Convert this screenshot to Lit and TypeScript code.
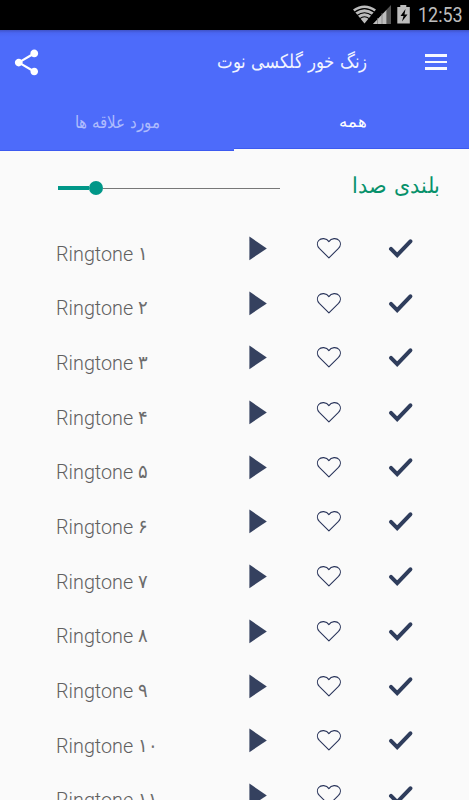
import { LitElement, html, css, svg } from "lit";
import { customElement, property } from "lit/decorators.js";

@customElement("fit-text")
class FitText extends LitElement {
  @property({ type: String }) text = "";
  @property({ type: Number }) width = 50;
  @property({ type: Number }) size = 18;
  @property({ type: Number }) baseline = 24;
  static styles = css`
    :host { display: block; height: 36px; }
    svg { display: block; overflow: visible; fill: currentColor; }
    text { font-family: "DejaVu Sans", sans-serif; font-weight: 200; direction: rtl; }
  `;
  render() {
    return html`<svg width=${this.width} height="36">
      ${svg`<text x=${this.width} y=${this.baseline} font-size=${this.size} textLength=${this.width} lengthAdjust="spacingAndGlyphs">${this.text}</text>`}
    </svg>`;
  }
}

@customElement("ringtone-row")
class RingtoneRow extends LitElement {
  @property({ type: String }) number = "";
  static styles = css`
    :host {
      display: grid;
      grid-template-columns: 191px 68px 72px 1fr;
      height: 54.7px;
      padding-left: 55.5px;
      flex: none;
      box-sizing: border-box;
    }
    .name {
      font: 300 20.4px/30px Roboto, "DejaVu Sans", sans-serif;
      color: #606060;
      padding-top: 10.6px;
      display: flex;
      white-space: pre;
    }
    .word { width: 82px; transform: scaleX(0.97); transform-origin: left; }
    .digits {
      font: 200 18.5px/30px "DejaVu Sans", sans-serif;
      transform: scaleX(0.95);
      transform-origin: left;
      color: #6c6c6c;
    }
    svg { display: block; width: 28px; height: 28px; margin: 6px 0 0 0.5px; }
  `;
  render() {
    return html`
      <div class="name"><span class="word">Ringtone</span><span class="digits">${this.number}</span></div>
      <svg viewBox="0 0 28 28"><path d="M2.4 2.6v23.6L19.8 14.4z" fill="#35415f" /></svg>
      <svg viewBox="0 0 28 28"><path d="M13.900 23.900L4.300 14.400C1.900 11.800 1.900 8.500 3.700 6.500C6 3.900 11.500 3.800 13.900 7.600C16.300 3.800 21.800 3.900 24.100 6.500C25.900 8.500 25.900 11.800 23.500 14.400z" fill="none" stroke="#29345a" stroke-width="1.100" stroke-linejoin="round" /></svg>
      <svg viewBox="0 0 28 28"><path d="M4 14.900L10.200 21.100L23.400 7.300" fill="none" stroke="#2f3d5c" stroke-width="4" stroke-linecap="round" /></svg>
    `;
  }
}

@customElement("app-root")
class AppRoot extends LitElement {
  static styles = css`
    :host {
      display: flex;
      flex-direction: column;
      width: 469px;
      height: 800px;
      overflow: hidden;
      background: #fafafa;
    }
    .status {
      height: 30px;
      flex: none;
      background: #000;
      color: #bdbdbd;
      display: flex;
      justify-content: flex-end;
      font: 400 19.5px/31px Roboto, sans-serif;
    }
    .status svg { display: block; }
    .clock { width: 51px; white-space: nowrap; transform: scaleX(0.92); transform-origin: left; }
    header {
      height: 121px;
      flex: none;
      background: linear-gradient(#4053c8, #4a66f2 3px, #4d6bfa 7px);
      color: #fff;
    }
    .bar { height: 64px; display: flex; padding: 0 22px 0 11px; }
    .share { width: 31px; height: 31px; margin-top: 17px; fill: #fff; }
    .title { margin: 13px 58px 0 auto; color: #f1f4ff; }
    .menu { width: 22px; margin-top: 24px; display: flex; flex-direction: column; gap: 4px; }
    .menu i { height: 2.5px; background: #f6f8ff; }
    .tabs { display: grid; grid-template-columns: 234px 235px; height: 57px; }
    .tab { box-sizing: border-box; padding-top: 9px; }
    .idle { color: #aebbfd; padding-left: 75px; border-bottom: 1px solid #3c5af0; }
    .active { padding-left: 105px; border-bottom: 2px solid #fafafa; box-shadow: inset 0 -1px #3c5af0; }
    .volume { height: 77px; flex: none; display: flex; padding: 0 29px 0 58px; }
    .slider { width: 222px; height: 14px; margin-top: 30px; display: flex; align-items: center; }
    .fill { width: 31px; height: 4px; background: #009788; }
    .thumb { width: 14px; height: 14px; border-radius: 50%; background: #009788; margin-left: -0.5px; }
    .track { flex: 1; height: 1px; background: #777; }
    .label { margin: 18px 0 0 auto; color: #07916a; }
    .list { display: flex; flex-direction: column; }
  `;
  private numbers = ["۱", "۲", "۳", "۴", "۵", "۶", "۷", "۸", "۹", "۱۰", "۱۱"];
  render() {
    return html`
      <div class="status">
        <svg width="65" height="30" viewBox="353 0 65 30">
          <path d="M364.500 23.500L353 9.500Q364.500 1.500 376 9.500z" fill="#bdbdbd" />
          <g fill="none" stroke="#000" stroke-width="1.100">
            <path d="M354.500 12.300Q364.500 5 374.500 12.300M357 15.500Q364.500 10 372 15.500M359.800 18.600Q364.500 15 369.200 18.600" />
          </g>
          <path d="M373 24L391 5v19z" fill="#555" />
          <path d="M373 24L386.500 10v14z" fill="#bdbdbd" />
          <path d="M377.500 18v6M382 13v11M386.500 10v14" stroke="#777" stroke-width=".7" />
          <path d="M397.300 7h3V5h6v2h3.500v16.500h-12.500z" fill="#bdbdbd" />
          <path d="M405.500 9l-5 7h3l-1.500 5.500 5.500-7h-3z" fill="#000" />
        </svg>
        <span class="clock">12:53</span>
      </div>
      <header>
        <div class="bar">
          <svg class="share" viewBox="0 0 24 24"><path d="M18 16.080c-.76 0-1.440.3-1.960.77L8.910 12.700c.05-.23.09-.46.09-.7s-.04-.47-.09-.7l7.050-4.110c.54.5 1.250.81 2.040.81 1.660 0 3-1.340 3-3s-1.340-3-3-3-3 1.340-3 3c0 .24.04.47.09.7L8.040 9.810C7.500 9.310 6.790 9 6 9c-1.660 0-3 1.340-3 3s1.340 3 3 3c.79 0 1.500-.31 2.040-.81l7.120 4.160c-.05.21-.08.43-.08.65 0 1.610 1.310 2.920 2.920 2.920s2.920-1.310 2.920-2.920-1.310-2.920-2.920-2.920z" /></svg>
          <fit-text class="title" text="زنگ خور گلکسی نوت" .width=${150} .size=${18.5} .baseline=${24.5}></fit-text>
          <div class="menu"><i></i><i></i><i></i></div>
        </div>
        <div class="tabs">
          <div class="tab idle"><fit-text text="مورد علاقه ها" .width=${85} .size=${17} .baseline=${24.5}></fit-text></div>
          <div class="tab active"><fit-text text="همه" .width=${27} .size=${16}></fit-text></div>
        </div>
      </header>
      <div class="volume">
        <div class="slider"><div class="fill"></div><div class="thumb"></div><div class="track"></div></div>
        <fit-text class="label" text="بلندی صدا" .width=${88} .size=${22}></fit-text>
      </div>
      <div class="list">${this.numbers.map((n) => html`<ringtone-row .number=${n}></ringtone-row>`)}</div>
    `;
  }
}
